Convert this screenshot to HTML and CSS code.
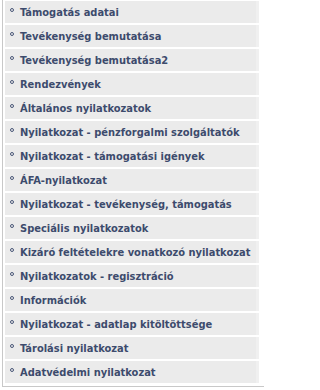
FILE: index.html
```html
<!DOCTYPE html>
<html lang="hu">
<head>
<meta charset="utf-8">
<link rel="stylesheet" href="styles.css">
</head>
<body>
<div class="menu">
  <ul class="menu-list">
    <li class="menu-item"><a href="#">Támogatás adatai</a></li>
    <li class="menu-item"><a href="#">Tevékenység bemutatása</a></li>
    <li class="menu-item"><a href="#">Tevékenység bemutatása2</a></li>
    <li class="menu-item"><a href="#">Rendezvények</a></li>
    <li class="menu-item"><a href="#">Általános nyilatkozatok</a></li>
    <li class="menu-item"><a href="#">Nyilatkozat - pénzforgalmi szolgáltatók</a></li>
    <li class="menu-item"><a href="#">Nyilatkozat - támogatási igények</a></li>
    <li class="menu-item"><a href="#">ÁFA-nyilatkozat</a></li>
    <li class="menu-item"><a href="#">Nyilatkozat - tevékenység, támogatás</a></li>
    <li class="menu-item"><a href="#">Speciális nyilatkozatok</a></li>
    <li class="menu-item"><a href="#">Kizáró feltételekre vonatkozó nyilatkozat</a></li>
    <li class="menu-item"><a href="#">Nyilatkozatok - regisztráció</a></li>
    <li class="menu-item"><a href="#">Információk</a></li>
    <li class="menu-item"><a href="#">Nyilatkozat - adatlap kitöltöttsége</a></li>
    <li class="menu-item"><a href="#">Tárolási nyilatkozat</a></li>
    <li class="menu-item"><a href="#">Adatvédelmi nyilatkozat</a></li>
  </ul>
</div>
</body>
</html>
```
FILE: styles.css
```css
html, body {
  margin: 0;
  padding: 0;
  background: #ffffff;
  overflow: hidden;
}
.menu {
  margin-left: 2px;
  width: 261px;
  border-left: 1px solid #c8c8c8;
  border-bottom: 1px solid #c8c8c8;
  padding: 1px 0 3px 0;
}
.menu-list {
  list-style: none;
  margin: 0;
  padding: 0;
  display: flex;
  flex-direction: column;
  gap: 2px;
}
.menu-item {
  margin-left: 2px;
  width: 251px;
  height: 22px;
  background: #ebebeb;
  border-right: 3px solid #f0f0f0;
  display: flex;
  align-items: center;
}
.menu-item a {
  position: relative;
  display: block;
  padding-left: 15px;
  font-family: "DejaVu Sans Condensed", "DejaVu Sans", sans-serif;
  font-weight: bold;
  font-size: 11px;
  color: #3d4b6d;
  text-decoration: none;
  white-space: nowrap;
}
.menu-item a::before {
  content: "";
  position: absolute;
  left: 5px;
  top: 2px;
  width: 2px;
  height: 2px;
  border: 1px solid #4a5878;
  border-radius: 50%;
}
```
